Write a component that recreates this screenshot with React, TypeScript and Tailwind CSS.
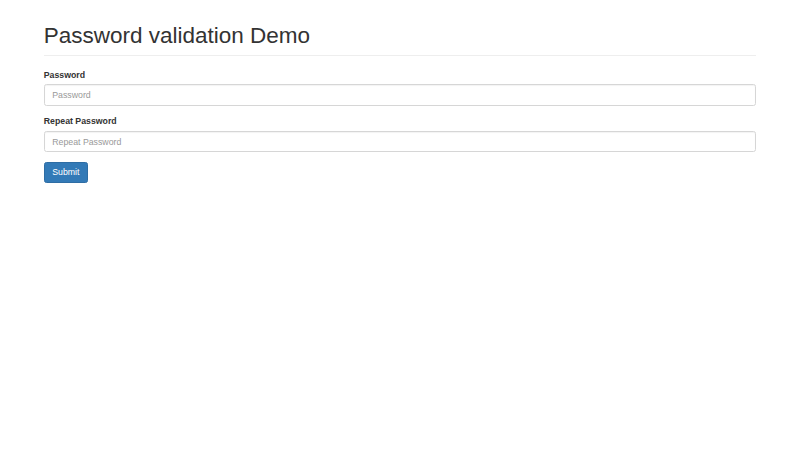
import { useState } from "react";

const font = "font-['Liberation_Sans','Helvetica_Neue',Arial,sans-serif]";

function Field({
  id,
  label,
  value,
  onChange,
}: {
  id: string;
  label: string;
  value: string;
  onChange: (v: string) => void;
}) {
  return (
    <div className="mb-[9.6px]">
      <label
        htmlFor={id}
        className="mb-[3.1px] block text-[8.75px] font-bold leading-[12.5px] text-[#333]"
      >
        {label}
      </label>
      <input
        id={id}
        type="password"
        placeholder={label}
        value={value}
        onChange={(e) => onChange(e.target.value)}
        className="block h-[21.5px] w-full rounded-[2.5px] border border-[#d6d6d6] bg-white px-[7.5px] text-[8.75px] leading-[12.5px] text-[#555] shadow-[inset_0_1px_1px_rgba(0,0,0,0.05)] outline-none placeholder:text-[#999]"
      />
    </div>
  );
}

export default function App() {
  const [password, setPassword] = useState("");
  const [repeat, setRepeat] = useState("");

  return (
    <div className={`${font} min-h-[450px] w-full bg-white px-[43.75px] pt-[24.3px] text-[#333]`}>
      <div className="mb-[12.5px] border-b border-[#eee] pb-[6px]">
        <h1 className="text-[22.5px] font-normal leading-[24.75px] text-[#333]">
          Password validation Demo
        </h1>
      </div>
      <form onSubmit={(e) => e.preventDefault()}>
        <Field id="password" label="Password" value={password} onChange={setPassword} />
        <Field id="repeat" label="Repeat Password" value={repeat} onChange={setRepeat} />
        <button
          type="submit"
          className="block h-[21.5px] rounded-[2.5px] border border-[#2e6da4] bg-[#337ab7] px-[7.5px] text-[8.75px] leading-[12.5px] text-white"
        >
          Submit
        </button>
      </form>
    </div>
  );
}
